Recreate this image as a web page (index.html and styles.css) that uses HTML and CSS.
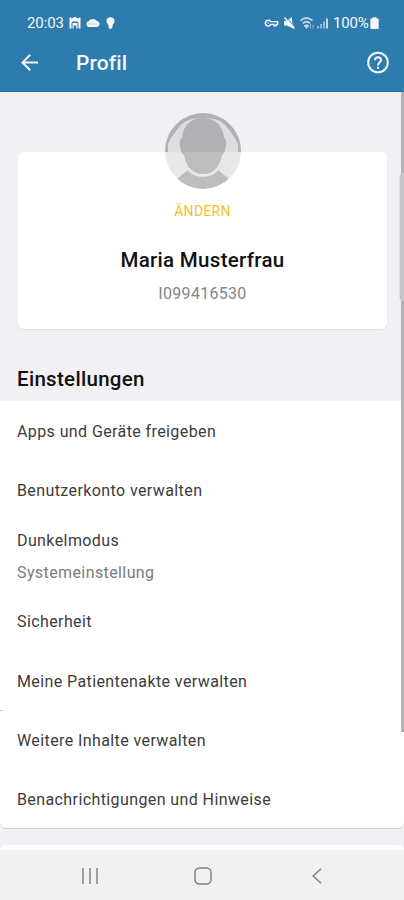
FILE: index.html
```html
<!DOCTYPE html>
<html lang="de">
<head>
<meta charset="utf-8">
<title>Profil</title>
<link rel="stylesheet" href="styles.css">
</head>
<body>
<div class="screen">
  <header class="header">
    <div class="status">
      <span class="time">20:03</span>
      <svg class="notif" width="48" height="14" viewBox="0 0 48 14" fill="currentColor">
        <path d="M.5 1.500h1.800v1.200L6 .8l3.700 1.900V1.500h1.800v11h-2V7.200L8.500 5.500h-5L2.500 7.200v5.300h-2z"/>
        <path d="M3.500 7h5v5.500H7.300V9.500H4.700v3H3.500z"/>
        <path d="M20 11a3 3 0 0 1-.3-5.900 4.800 3.900 0 0 1 8.300-.2 3.100 3.100 0 0 1 .1 6.100z"/>
        <path d="M37.500 5.300a4 4 0 1 1 8 0c0 1.800-1.500 2.600-2 4.100v1.800l-1 1.500h-2l-1-1.500V9.400c-.5-1.500-2-2.300-2-4.100z"/>
        <path d="M17.500 8h10" stroke="#9cc1dd" stroke-width=".7"/>
      </svg>
      <svg class="system" width="66" height="14" viewBox="0 0 66 14" fill="none" stroke="currentColor">
        <path d="M4.200 4.200a2.900 2.900 0 1 0 2.600 4.200H10v1.500h2.200V8.400h1.500V5.600H6.800a2.900 2.900 0 0 0-2.600-1.400z" stroke-width="1.400"/>
        <circle cx="4.200" cy="7.100" r=".8" fill="currentColor" stroke="none"/>
        <path d="M20 5h2.500L28 1v5l2 4v3l-4-2-3.500-1.500H20z" fill="currentColor" stroke="none"/>
        <path d="M21.500 .5l9.500 10.500" stroke="#2e7bad" stroke-width="1"/>
        <path d="M20.500 1.500l10 11" stroke-width="1.400"/>
        <path d="M36.500 4.700c3.700-3.300 8.300-3.300 12 0M38.800 7.400c2.300-2 5.100-2 7.400 0M41 9.800c1-.8 2-.8 3 0l-1.500 1.800z" stroke="#bed6e7" stroke-width="1.800"/>
        <path d="M46.500 8v4.500M49 9v3.500" stroke="#91b9d5"/>
        <path d="M54 12.500V10M57 12.500V8M60 12.500V5.500" stroke="#9bc0da" stroke-width="1.800"/>
        <path d="M63 12.500v-10" stroke="#d5e5f0" stroke-width="1.800"/>
      </svg>
      <span class="percent">100%</span>
      <svg class="battery" width="9" height="14" viewBox="0 0 9 14" fill="currentColor"><path d="M2.500 1.200h4v1.300H8a.7.7 0 0 1 .7.700v9a.8.8 0 0 1-.8.800H1.200a.8.8 0 0 1-.8-.8v-9a.7.7 0 0 1 .7-.7h1.400z"/></svg>
    </div>
    <div class="toolbar">
      <svg width="18" height="18" viewBox="0 0 18 18" fill="none" stroke="currentColor" stroke-width="2"><path d="M17 8.500H2M9.200 .7L1.500 8.500l7.700 7.800"/></svg>
      <h1 class="title">Profil</h1>
      <svg class="help" width="24" height="24" viewBox="0 0 24 24" fill="none" stroke="currentColor" stroke-width="2"><circle cx="12" cy="11.500" r="9.800"/><path d="M9 9.200a3 3 0 1 1 6 0c0 2-3 2.400-3 5.200"/><path d="M12 15.700v2"/></svg>
    </div>
  </header>
  <main class="content">
    <section class="card">
      <svg class="avatar" width="76" height="76" viewBox="0 0 76 76">
        <defs>
          <clipPath id="round"><circle cx="38" cy="38" r="38"/></clipPath>
          <clipPath id="upper"><path d="M0 0h76v39H0z"/></clipPath>
          <clipPath id="lower"><path d="M0 39h76v37H0z"/></clipPath>
        </defs>
        <g clip-path="url(#round)">
          <g clip-path="url(#upper)">
            <path fill="#b1b1b5" d="M0 0h76v39H0z"/>
            <path fill="#dedee2" d="M3 39V31C6 24 12 17 15 13c5-5 10-8 23-8s18 3 23 8c3 4 9 11 12 18v8z"/>
          </g>
          <path fill="#e8e8e8" d="M0 39h76v37H0z"/>
          <path fill="#bdbdbd" d="M8 76l5-11 10-8c9 7 21 7 30 0l10 8 6 11z"/>
          <path fill="#e8e8e8" d="M19 50h38c-3 9-10 14-19 14s-16-5-19-14z"/>
          <path fill="#b1b1b5" clip-path="url(#upper)" d="M17 25C18 12 26 5 38 5s20 7 21 20c2 1 3 4 2 8s-1 8-4 9c-2 12-9 19-19 19s-17-7-19-19c-3-1-3-5-4-9s0-7 2-8z"/>
          <path fill="#bdbdbd" clip-path="url(#lower)" d="M17 25C18 12 26 5 38 5s20 7 21 20c2 1 3 4 2 8s-1 8-4 9c-2 12-9 19-19 19s-17-7-19-19c-3-1-3-5-4-9s0-7 2-8z"/>
        </g>
      </svg>
      <a class="change">ÄNDERN</a>
      <h2 class="name">Maria Musterfrau</h2>
      <div class="number">I099416530</div>
    </section>
    <h2 class="heading">Einstellungen</h2>
    <ul class="list">
      <li><span>Apps und Geräte freigeben</span></li>
      <li><span>Benutzerkonto verwalten</span></li>
      <li class="double"><span>Dunkelmodus</span><span class="sub">Systemeinstellung</span></li>
      <li><span>Sicherheit</span></li>
      <li><span>Meine Patientenakte verwalten</span></li>
      <li class="group"><span>Weitere Inhalte verwalten</span></li>
      <li><span>Benachrichtigungen und Hinweise</span></li>
    </ul>
    <div class="next"></div>
    <div class="scrollbar"></div>
    <div class="edge"></div>
  </main>
  <nav class="nav">
    <svg width="16" height="16" viewBox="0 0 16 16" fill="none" stroke="currentColor" stroke-width="1.500"><path d="M1 0v16M8 0v16M15 0v16"/></svg>
    <svg width="18" height="18" viewBox="0 0 18 18" fill="none" stroke="currentColor" stroke-width="1.500"><rect x="1" y="1" width="16" height="16" rx="4.500"/></svg>
    <svg width="10" height="16" viewBox="0 0 10 16" fill="none" stroke="currentColor" stroke-width="1.500"><path d="M9 .7L1.200 8 9 15.300"/></svg>
  </nav>
</div>
</body>
</html>
```
FILE: styles.css
```css
* { box-sizing: border-box; }
body { margin: 0; font-family: Roboto, sans-serif; color: #3c3c3c; }
h1, h2, ul { margin: 0; padding: 0; font-weight: 500; }
svg { display: block; flex: none; }
.screen { width: 404px; height: 900px; display: flex; flex-direction: column; overflow: hidden; background: #f0f0f5; }
.header { height: 92px; flex: none; background: #2e7bad; color: #f3f8fc; border-bottom: 1px solid #216f9f; }
.status { display: flex; align-items: center; height: 46px; padding: 0 25px 0 27px; font-size: 15px; }
.time { width: 42px; letter-spacing: -.1px; }
.system { margin-left: auto; }
.percent { margin-left: 3px; width: 37px; letter-spacing: -.2px; }
.toolbar { display: flex; align-items: center; height: 33px; padding: 0 14px 0 21px; }
.title { margin-left: 37px; font-size: 21px; line-height: 32px; letter-spacing: .1px; }
.help { margin-left: auto; }
.content { flex: 1; min-height: 0; position: relative; overflow: hidden; display: flex; flex-direction: column; }
.card { flex: none; height: 177px; margin: 60px 17px 0 18px; background: #fff; border-radius: 6px; box-shadow: 0 1px 1px #dedee2; display: flex; flex-direction: column; align-items: center; }
.avatar { margin-top: -39px; }
.change { margin-top: 12px; color: #f8be25; font-size: 14px; line-height: 20px; letter-spacing: .3px; }
.name { margin-top: 25px; color: #111; font-size: 20.500px; line-height: 28px; letter-spacing: .3px; }
.number { margin-top: 9px; color: #858585; font-size: 16px; line-height: 22px; letter-spacing: .3px; }
.heading { margin: 36px 0 0 17px; font-size: 20.500px; line-height: 28px; color: #111; letter-spacing: .3px; height: 36px; flex: none; }
.list { flex: none; height: 428px; list-style: none; background: #fff; border-radius: 0 0 6px 6px; border-bottom: 1px solid #cfcfd3; font-size: 16px; font-weight: 400; letter-spacing: .4px; }
.list li { height: 59.300px; padding: 1px 0 0 17px; display: flex; align-items: center; }
.list .double { height: 72px; flex-direction: column; align-items: flex-start; line-height: 32px; padding-top: 5px; }
.list .group { background: linear-gradient(#cfcfd3, #cfcfd3) 0 0 / 3px 1px no-repeat; }
.list .sub { color: #7c7c7c; }
.next { margin-top: 16px; flex: none; height: 8px; background: #fff; border-radius: 6px 6px 0 0; }
.scrollbar { position: absolute; right: 0; top: 0; width: 3px; height: 640px; background: #b2b2b4; }
.edge { position: absolute; right: 0; top: 81px; width: 5px; height: 128px; background: #c6c6c9; border-left: 1px solid #e4e4e8; border-radius: 4px 0 0 4px; }
.nav { height: 50px; flex: none; background: #f1f1f1; color: #828282; display: grid; grid-template-columns: repeat(3, 113.500px); justify-content: center; justify-items: center; align-items: center; padding: 2px 0 0 2px; }
```
